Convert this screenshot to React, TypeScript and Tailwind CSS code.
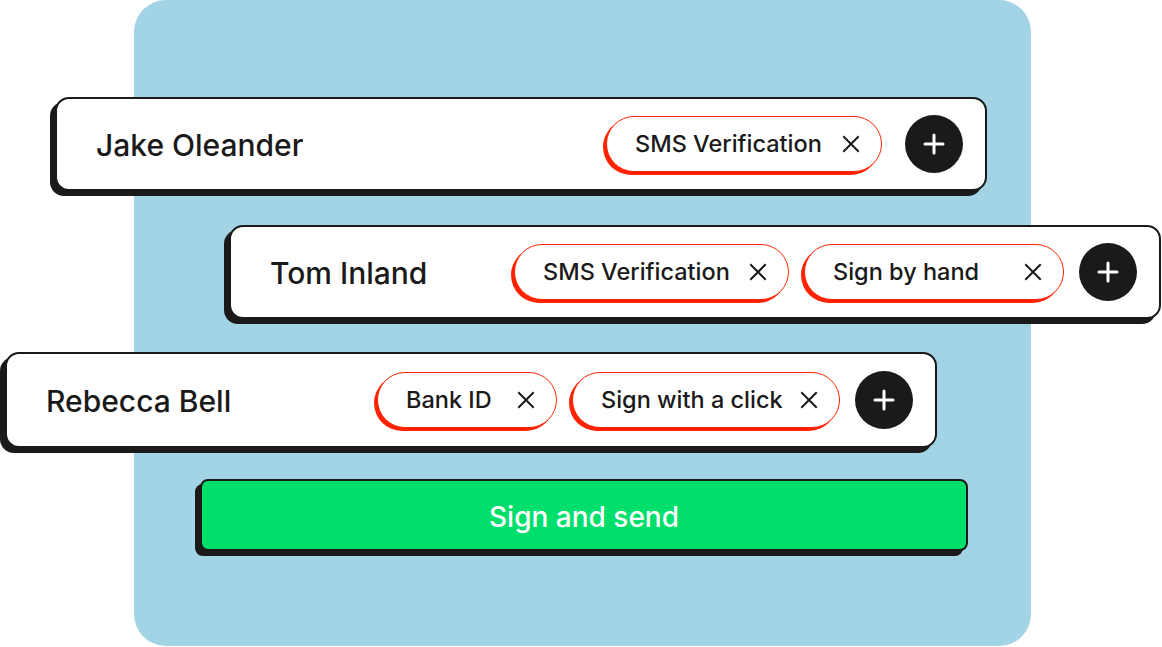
import React from "react";

const font = { fontFamily: "Inter, 'Liberation Sans', sans-serif" };

function XIcon() {
  return (
    <svg width="20" height="20" viewBox="0 0 20 20" fill="none" stroke="#1a1a1a" strokeWidth="2" strokeLinecap="square">
      <path d="M3 3 L17 17 M17 3 L3 17" />
    </svg>
  );
}

function PlusButton() {
  return (
    <div className="w-[58px] h-[58px] rounded-full bg-[#1a1a1a] flex items-center justify-center shrink-0">
      <svg width="22" height="22" viewBox="0 0 22 22" fill="none" stroke="#ffffff" strokeWidth="3" strokeLinecap="round">
        <path d="M11 2 V20 M2 11 H20" />
      </svg>
    </div>
  );
}

function Pill({ label, w }: { label: string; w: string }) {
  return (
    <div
      className={`h-[56px] ${w} rounded-full border-[1.5px] border-[#ff2200] bg-white shadow-[-3px_3px_0_#ff2200] flex items-center justify-between pl-[28px] pr-[20px] shrink-0`}
    >
      <span className="text-[23.5px] font-[450] text-[#1a1a1a] leading-none">{label}</span>
      <XIcon />
    </div>
  );
}

function Card({ name, children, className }: { name: string; children: React.ReactNode; className: string }) {
  return (
    <div
      className={`w-[932px] rounded-[14px] border-2 border-[#1a1a1a] bg-white shadow-[-5px_5px_0_#1a1a1a] flex items-center justify-between pl-[39px] pr-[22px] ${className}`}
    >
      <span className="text-[30px] font-[450] text-[#1a1a1a] leading-none pt-[2px]">{name}</span>
      <div className="flex items-center gap-[15px]">{children}</div>
    </div>
  );
}

export default function App() {
  return (
    <div className="relative w-[1162px] h-[647px] bg-white overflow-hidden" style={font}>
      <div className="absolute left-[134px] top-0 w-[897px] h-[646px] rounded-[32px] bg-[#a2d4e6]" />
      <div className="relative flex flex-col pt-[97px]">
        <Card name="Jake Oleander" className="ml-[55px] h-[94px]">
          <Pill label="SMS Verification" w="w-[276px]" />
          <div className="ml-[8px]">
            <PlusButton />
          </div>
        </Card>
        <Card name="Tom Inland" className="ml-[229px] mt-[34px] w-[931px] h-[94px]">
          <Pill label="SMS Verification" w="w-[275px]" />
          <Pill label="Sign by hand" w="w-[260px]" />
          <PlusButton />
        </Card>
        <Card name="Rebecca Bell" className="ml-[5px] mt-[33px] h-[96px]">
          <Pill label="Bank ID" w="w-[180px]" />
          <Pill label="Sign with a click" w="w-[268px]" />
          <PlusButton />
        </Card>
        <button className="ml-[200px] mt-[31px] w-[768px] h-[72px] rounded-[8px] border-2 border-[#1a1a1a] bg-[#00df6c] shadow-[-5px_5px_0_#1a1a1a] flex items-center justify-center">
          <span className="text-[28px] font-[450] text-white leading-none pt-[3px]">Sign and send</span>
        </button>
      </div>
    </div>
  );
}
